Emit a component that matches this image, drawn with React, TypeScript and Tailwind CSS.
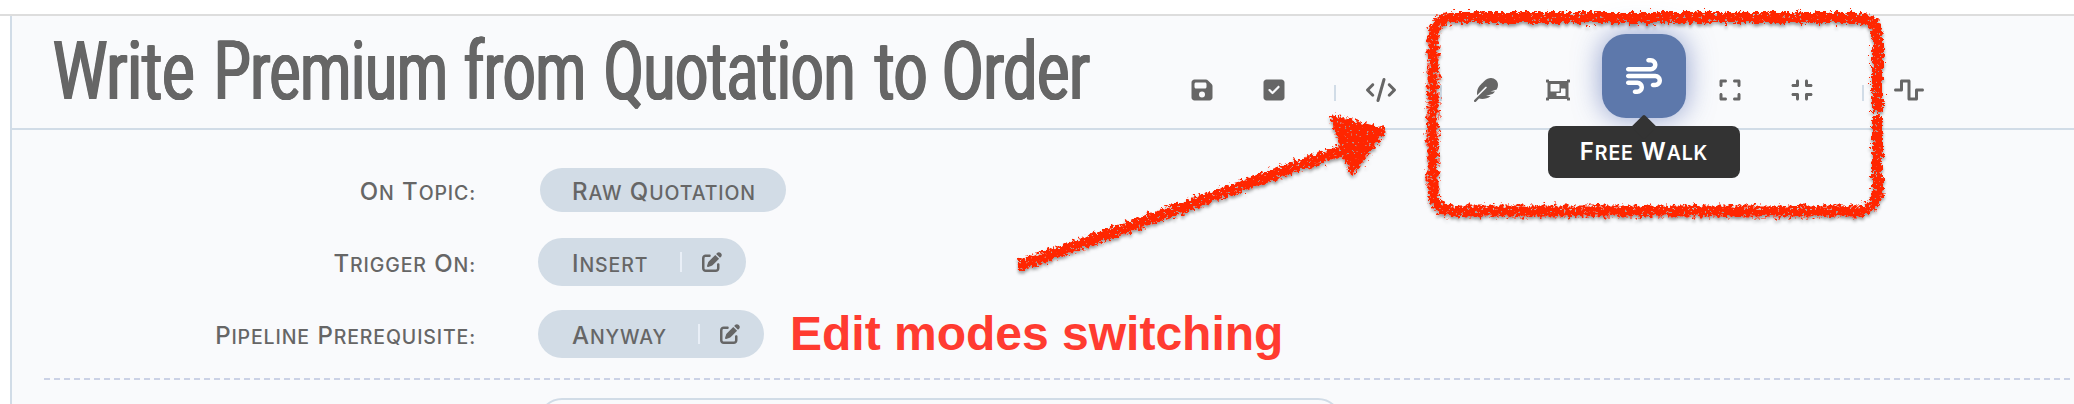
import type { ReactNode } from "react";
import { FaFeather, FaObjectGroup } from "react-icons/fa";
import {
  FaCode,
  FaCompress,
  FaExpand,
  FaFloppyDisk,
  FaPenToSquare,
  FaSquareCheck,
  FaWaveSquare,
  FaWind,
} from "react-icons/fa6";

const titleWords = [
  { text: "Write", className: "w-[161px]", scale: "scale-x-[0.745]" },
  { text: "Premium", className: "w-[250px]", scale: "scale-x-[0.706]" },
  { text: "from", className: "w-[140px]", scale: "scale-x-[0.70]" },
  { text: "Quotation", className: "w-[271px]", scale: "scale-x-[0.701]" },
  { text: "to", className: "w-[67px]", scale: "scale-x-[0.72]" },
  { text: "Order", className: "w-[150px]", scale: "scale-x-[0.735]" },
];

function SmallCaps({ text }: { text: string }) {
  return (
    <span className="flex gap-[7.5px] whitespace-nowrap">
      {text.split(" ").map((word) => (
        <span
          key={word}
          className="block text-[19.5px] leading-[28px] tracking-[0.87px] uppercase first-letter:text-[24px]"
        >
          {word}
        </span>
      ))}
    </span>
  );
}

function ToolButton({ children }: { children: ReactNode }) {
  return (
    <button className="flex h-[72px] w-[72px] shrink-0 items-center justify-center text-[24px]">{children}</button>
  );
}

function Separator({ className }: { className: string }) {
  return <span className={`mt-[6px] h-4 w-[2px] shrink-0 bg-[#d1dce7] ${className}`} />;
}

function Row({ label, children }: { label: string; children: ReactNode }) {
  return (
    <div className="flex h-[72px] items-center">
      <div className="flex w-[464px] shrink-0 justify-end pt-[4px]">
        <SmallCaps text={label} />
      </div>
      {children}
    </div>
  );
}

function EditablePill({ text, className }: { text: string; className: string }) {
  return (
    <div className={`ml-[62px] flex h-12 items-center rounded-full bg-[#d2dce6] pl-[34px] ${className}`}>
      <div className="grow pt-[4px]">
        <SmallCaps text={text} />
      </div>
      <span className="h-5 w-[2px] bg-[#e9eff7]" />
      <FaPenToSquare className="mr-6 ml-5 h-5 w-5" />
    </div>
  );
}

function Annotation() {
  return (
    <svg className="pointer-events-none absolute top-0 left-0" width="2074" height="404" viewBox="0 0 2074 404">
      <defs>
        <filter id="crayon" filterUnits="userSpaceOnUse" x="980" y="0" width="940" height="300">
          <feTurbulence type="fractalNoise" baseFrequency="0.28" numOctaves="3" seed="4" result="noise" />
          <feDisplacementMap in="SourceGraphic" in2="noise" scale="11" xChannelSelector="R" yChannelSelector="G" result="rough" />
          <feTurbulence type="fractalNoise" baseFrequency="0.36" numOctaves="2" seed="11" result="grain" />
          <feColorMatrix in="grain" type="matrix" values="0 0 0 0 0  0 0 0 0 0  0 0 0 0 0  -14 0 0 0 10.4" result="holes" />
          <feComposite in="rough" in2="holes" operator="in" result="stroke" />
          <feDropShadow in="stroke" dx="0" dy="2.5" stdDeviation="1.8" floodColor="#000" floodOpacity="0.4" />
        </filter>
      </defs>
      <g filter="url(#crayon)" stroke="#ff2600" strokeWidth="11" fill="none">
        <path d="M1877.5 112V38Q1877 17.5 1857 17.5H1454Q1433 18 1433 38V190Q1433 211 1454 211H1857Q1877 210 1877.5 190V116" />
        <path d="M1019 266L1345 149" />
        <path d="M1334 119L1382 131L1352 171Z" fill="#ff2600" strokeWidth="7" strokeLinejoin="round" />
      </g>
    </svg>
  );
}

export default function App() {
  return (
    <div className="relative flex h-[404px] w-[2074px] flex-col overflow-hidden bg-white font-['Inter',sans-serif] text-[#666666]">
      <div className="h-4 shrink-0 border-b-2 border-[#dddddd]" />
      <main className="ml-[10px] grow border-l-2 border-[#d1dce7] bg-[#f9fafc]">
        <header className="flex h-[114px] items-start border-b-2 border-[#d1dce7]">
          <h1 className="flex w-[1154px] shrink-0 pl-[41px] font-['Roboto',sans-serif] text-[82px] leading-[110px] font-normal whitespace-nowrap [text-shadow:0.7px_0_0_#666666,-0.7px_0_0_#666666,1.3px_0_0_#666666,-1.3px_0_0_#666666]">
            {titleWords.map((word) => (
              <span key={word.text} className={`shrink-0 ${word.className}`}>
                <span className={`inline-block origin-left ${word.scale}`}>{word.text}</span>
              </span>
            ))}
          </h1>
          <div className="flex items-center pt-[38px]">
            <ToolButton><FaFloppyDisk /></ToolButton>
            <ToolButton><FaSquareCheck /></ToolButton>
            <Separator className="mr-[9px] ml-[24px]" />
            <ToolButton><FaCode className="h-6 w-[30px]" /></ToolButton>
            <Separator className="mr-[8px] ml-[23px]" />
            <ToolButton><FaFeather /></ToolButton>
            <ToolButton><FaObjectGroup /></ToolButton>
            <div className="relative mx-2 -mt-7 h-[84px] w-[84px] shrink-0">
              <button className="flex h-full w-full items-center justify-center rounded-[24px] bg-[#5d78ab] text-[36px] text-white shadow-[0_0_28px_rgba(70,95,175,0.6)]">
                <FaWind />
              </button>
              <div className="absolute top-[92px] left-[-54px] flex h-[52px] w-[192px] items-center justify-center rounded-[8px] bg-[#333333] font-semibold text-white">
                <span className="absolute top-[-8px] left-[87px] h-[18px] w-[18px] rotate-45 rounded-[2px] bg-[#333333]" />
                <span className="relative"><SmallCaps text="Free Walk" /></span>
              </div>
            </div>
            <ToolButton><FaExpand /></ToolButton>
            <ToolButton><FaCompress /></ToolButton>
            <Separator className="mr-[9px] ml-[24px]" />
            <ToolButton><FaWaveSquare className="h-6 w-[30px]" /></ToolButton>
          </div>
        </header>
        <section className="h-[248px] pt-6 font-[450]">
          <Row label="On Topic:">
            <div className="ml-[64px] flex h-11 w-[246px] items-center rounded-full bg-[#d2dce6] pt-[4px] pl-[32px]">
              <SmallCaps text="Raw Quotation" />
            </div>
          </Row>
          <Row label="Trigger On:">
            <EditablePill text="Insert" className="w-[208px]" />
          </Row>
          <Row label="Pipeline Prerequisite:">
            <EditablePill text="Anyway" className="w-[226px]" />
            <div className="ml-[26px] font-['Liberation_Sans',sans-serif] text-[48px] leading-[48px] font-bold whitespace-nowrap text-[#ff3b30]">
              Edit modes switching
            </div>
          </Row>
        </section>
        <div className="ml-8 h-[2px] bg-[repeating-linear-gradient(90deg,#cbd2e6_0px,#cbd2e6_6px,transparent_6px,transparent_10px)]" />
        <div className="mt-[18px] ml-[526px] h-12 w-[804px] rounded-full border-2 border-[#d1dce7]" />
      </main>
      <Annotation />
    </div>
  );
}
